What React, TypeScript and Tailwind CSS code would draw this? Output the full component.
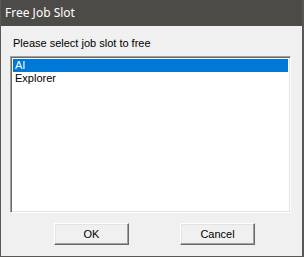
export default function App() {
  return (
    <div
      className="w-[304px] h-[257px] flex flex-col bg-[#f0f0f0] border-l border-r-2 border-b border-[#5a5856] text-[11px] text-black"
      style={{ fontFamily: '"Liberation Sans", Arial, sans-serif' }}
    >
      <div className="h-[26px] shrink-0 bg-[#4d4b48] text-white text-[12px] flex items-center pl-[4px] pb-[1px]" style={{ fontFamily: '"Noto Sans", "Open Sans", sans-serif' }}>
        Free Job Slot
      </div>
      <div className="flex flex-col pl-[9px]">
        <div className="pt-[11px] pl-[3px] h-[30px] leading-[13px]">Please select job slot to free</div>
        <div className="w-[281px] h-[157px] border border-t-[#a0a0a0] border-l-[#a0a0a0] border-b-white border-r-white shadow-[inset_1px_1px_0_#696969,inset_-1px_-1px_0_#e3e3e3] bg-white p-[2px] pt-[2px]">
          <div className="h-[13px] leading-[13px] bg-[#0078d7] text-white pl-[2px]">AI</div>
          <div className="h-[13px] leading-[13px] pl-[2px]">Explorer</div>
        </div>
        <div className="flex pt-[10px] pl-[44px] gap-[51px]">
          <button className="w-[75px] h-[22px] border border-t-white border-l-white border-b-[#696969] border-r-[#696969] shadow-[inset_-1px_-1px_0_#a0a0a0,inset_1px_1px_0_#e3e3e3] bg-[#f0f0f0] text-[11px] leading-[20px]">OK</button>
          <button className="w-[75px] h-[22px] border border-t-white border-l-white border-b-[#696969] border-r-[#696969] shadow-[inset_-1px_-1px_0_#a0a0a0,inset_1px_1px_0_#e3e3e3] bg-[#f0f0f0] text-[11px] leading-[20px]">Cancel</button>
        </div>
      </div>
    </div>
  );
}
